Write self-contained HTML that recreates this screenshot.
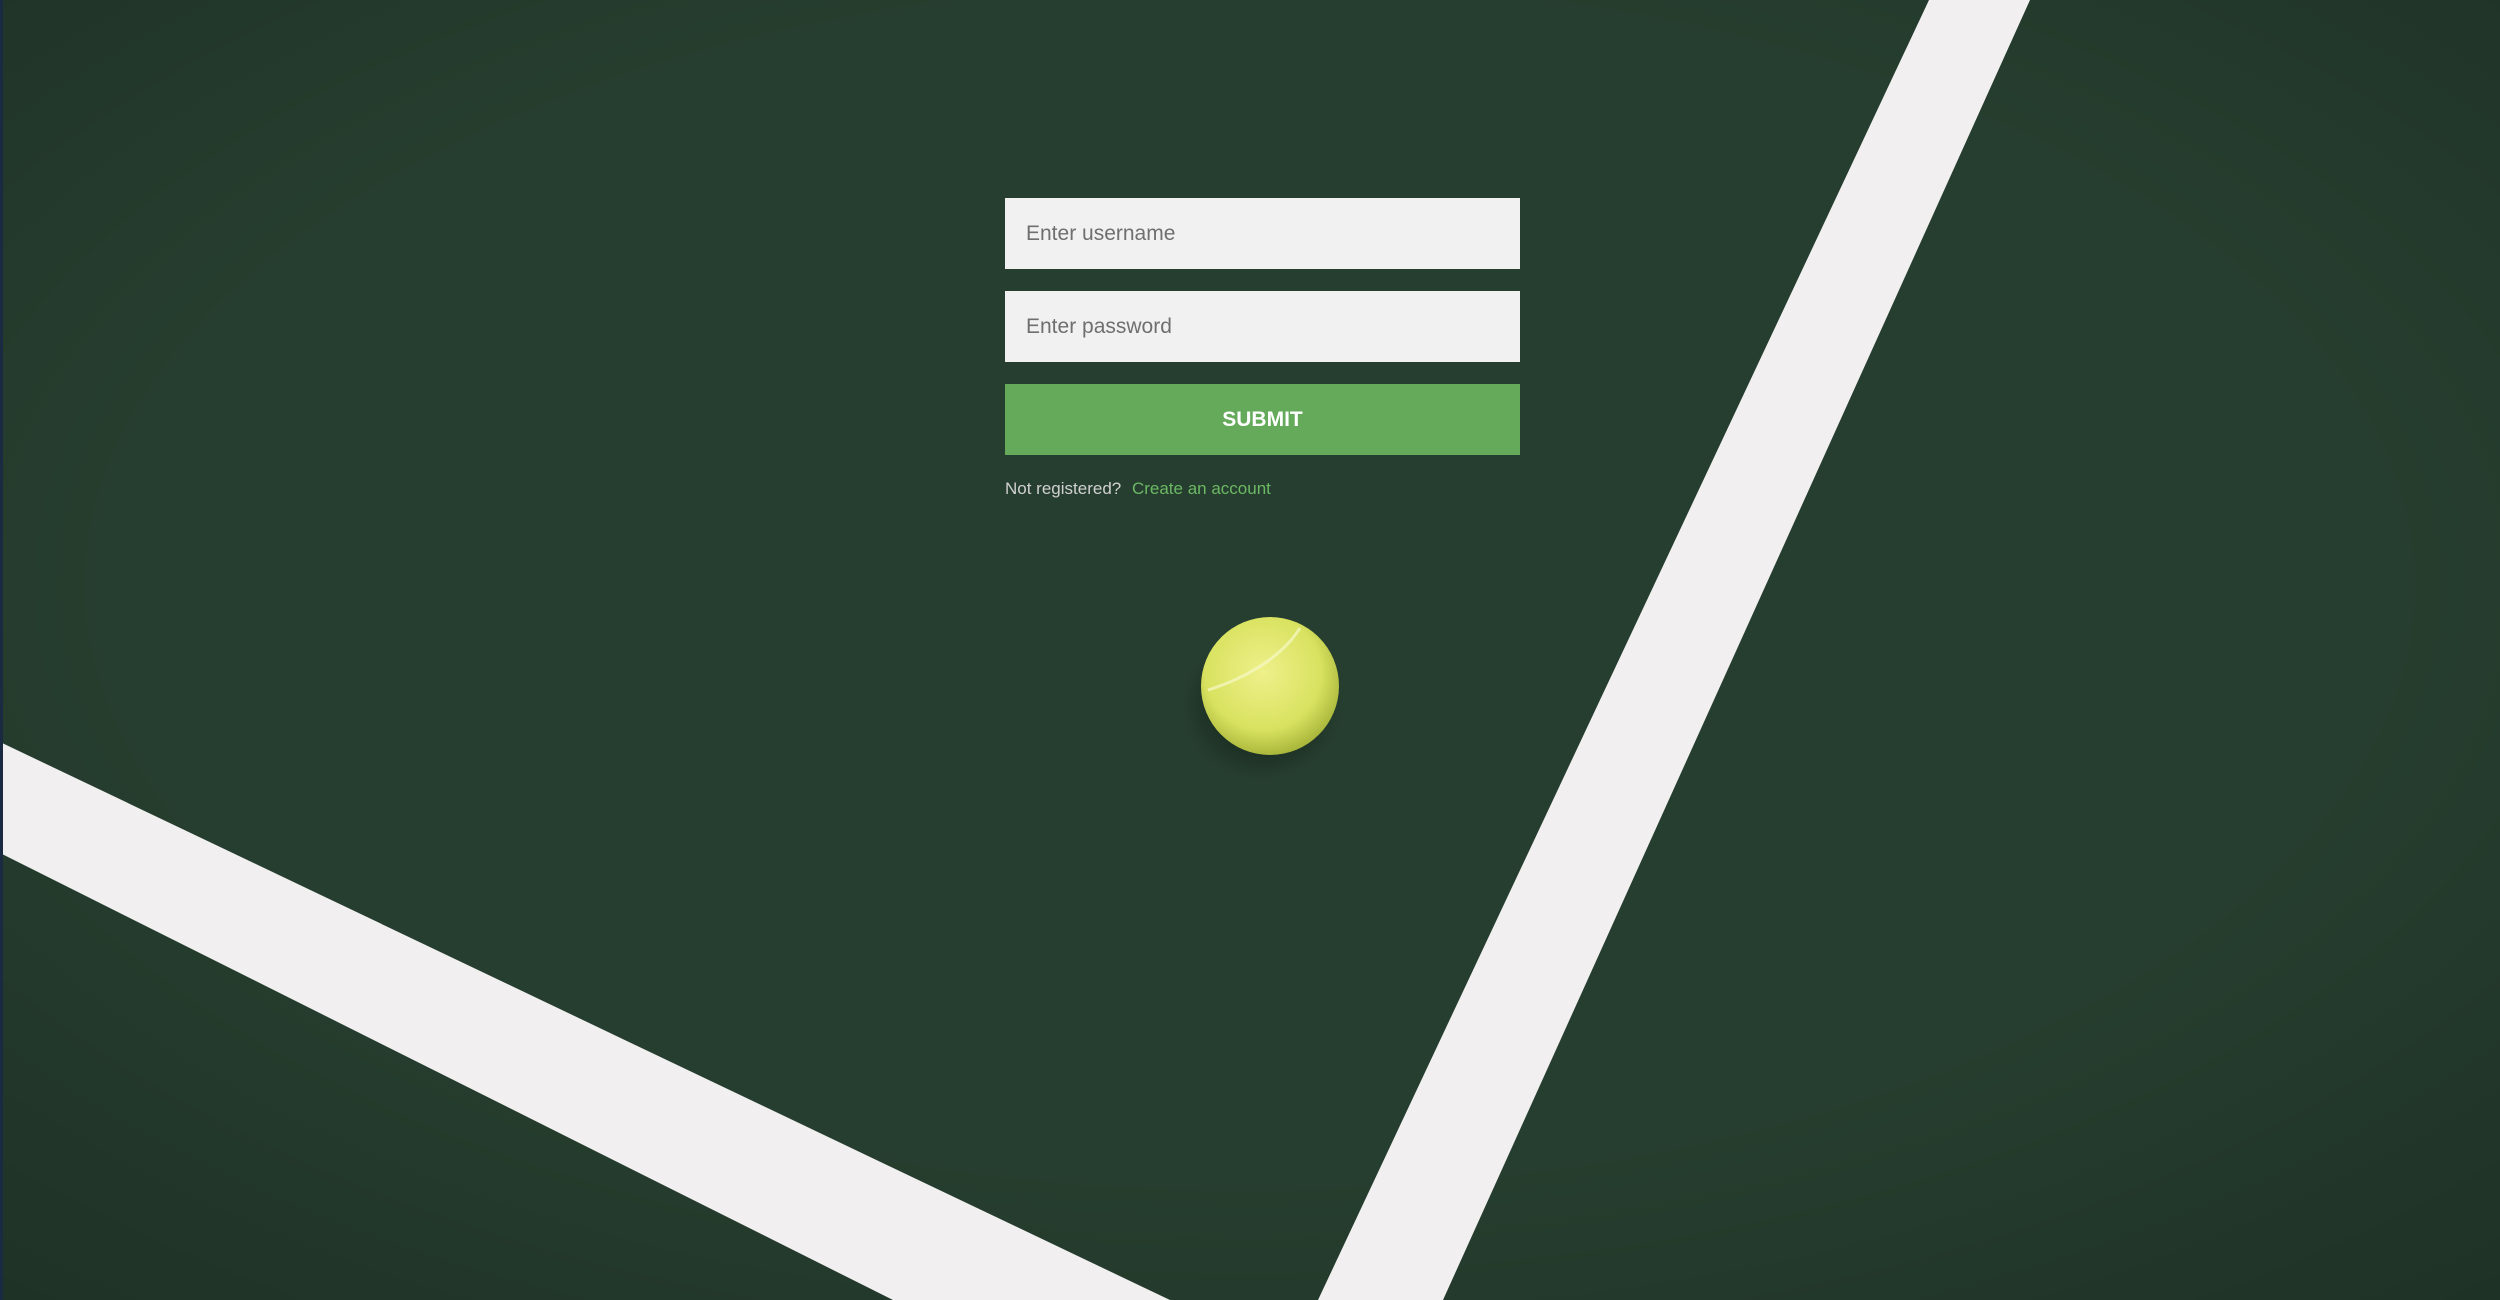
<!DOCTYPE html>
<html><head><meta charset="utf-8"><style>
html,body{margin:0;padding:0;width:2500px;height:1300px;overflow:hidden;}
body{position:relative;background:#253c2e;font-family:"Liberation Sans",Arial,sans-serif;}
svg{position:absolute;left:0;top:0;}
.f{position:absolute;left:1005px;width:515px;}
.in{height:71px;background:#f1f1f1;box-sizing:border-box;padding-left:21px;line-height:71px;font-size:21px;color:#6f6f6f;}
.btn{height:71px;background:#64aa5a;color:#fff;font-weight:bold;text-align:center;line-height:71px;font-size:21px;}
.t{position:absolute;left:1005px;top:479px;font-size:17px;color:#d0d0d0;}
.t span{color:#6cb864;margin-left:6px;}
</style></head><body>
<svg width="2500" height="1300" viewBox="0 0 2500 1300">
<defs>
<radialGradient id="v" cx="50%" cy="45%" r="75%">
<stop offset="0.6" stop-color="#000" stop-opacity="0"/>
<stop offset="1" stop-color="#000" stop-opacity="0.2"/>
</radialGradient>
<radialGradient id="b" cx="45%" cy="40%" r="60%">
<stop offset="0" stop-color="#eef08a"/>
<stop offset="0.7" stop-color="#d9e260"/>
<stop offset="1" stop-color="#aab83c"/>
</radialGradient>
<radialGradient id="sh" cx="50%" cy="50%" r="50%">
<stop offset="0" stop-color="#000" stop-opacity="0.6"/>
<stop offset="1" stop-color="#000" stop-opacity="0"/>
</radialGradient>
</defs>
<rect width="2500" height="1300" fill="#263e2f"/>
<rect width="2500" height="1300" fill="url(#v)"/>
<polygon points="0,742 1170,1300 893,1300 0,853" fill="#f1eff0"/>
<polygon points="1929,0 2030,0 1443,1300 1318,1300" fill="#f1eff0"/>
<ellipse cx="1262" cy="705" rx="80" ry="75" fill="url(#sh)"/>
<circle cx="1270" cy="686" r="69" fill="url(#b)"/>
<path d="M1208,690 C1240,680 1280,660 1300,628" stroke="#f6f8c8" stroke-width="3" fill="none" opacity="0.7"/>
<rect width="3" height="1300" fill="#1a2a40"/>
</svg>
<div class="f in" style="top:198px">Enter username</div>
<div class="f in" style="top:291px">Enter password</div>
<div class="f btn" style="top:384px">SUBMIT</div>
<div class="t">Not registered? <span>Create an account</span></div>
</body></html>
